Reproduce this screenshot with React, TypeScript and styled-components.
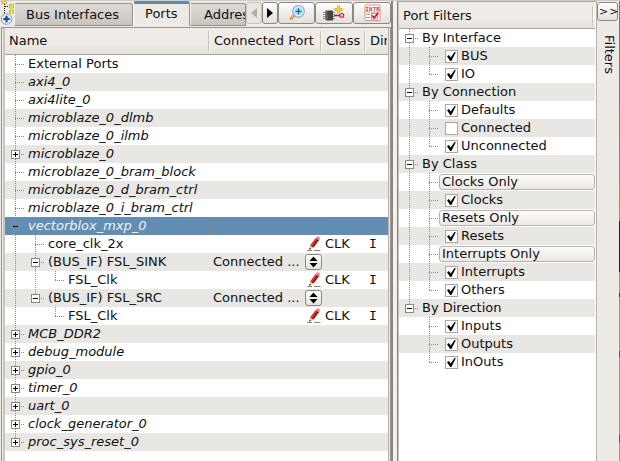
import React from 'react';
import styled, { createGlobalStyle, css } from 'styled-components';

const Global = createGlobalStyle`
  * { box-sizing: border-box; }
  body { margin: 0; background: #edeae6; overflow: hidden; }
`;

const Window = styled.div`
  display: flex;
  width: 620px;
  height: 461px;
  overflow: hidden;
  background: #edeae6;
  color: #101010;
  font: 13px/18px 'DejaVu Sans', sans-serif;
  white-space: pre;
  border-top: 1px solid #cfcbc6;
`;

const LeftPane = styled.div`
  display: flex;
  flex-direction: column;
  width: 391px;
  flex: none;
`;

const TabBar = styled.div`
  display: flex;
  height: 25px;
  flex: none;
  align-items: flex-start;
`;

const Corner = styled.div`
  width: 14px;
  height: 25px;
  flex: none;
`;

const Tab = styled.div<{ $w: number; $active?: boolean; $pad: number }>`
  flex: none;
  width: ${p => p.$w}px;
  height: 23px;
  margin-top: 2px;
  padding: 2px 0 0 ${p => p.$pad}px;
  overflow: hidden;
  border: 1px solid #96918c;
  border-left-color: #f4f2ef;
  border-radius: 3px 3px 0 0;
  background: linear-gradient(#dedad5, #c9c4be);
  ${p => p.$active && css`
    height: 25px;
    margin-top: 0;
    padding-top: 1px;
    border: 1px solid #96918c;
    border-left-color: #fff;
    border-top: 3px solid #5c89ae;
    border-bottom: 0;
    background: #edeae6;
  `}
`;

const ToolButton = styled.div<{ $w: number }>`
  display: flex;
  flex: none;
  align-items: center;
  justify-content: center;
  width: ${p => p.$w}px;
  height: 22px;
  margin: 1px 0 0;
  border: 1px solid #8d8883;
  border-radius: 3px;
  background: linear-gradient(#fdfcfb, #e3dfda);
`;

const ScrollButton = styled(ToolButton)<{ $disabled?: boolean }>`
  ${p => p.$disabled && css`
    border-color: #c5c0ba;
    background: #e9e6e2;
  `}
`;

const TableFrame = styled.div`
  display: flex;
  flex-direction: column;
  flex: 1;
  margin: 1px 0 0 1px;
  padding-right: 1px;
  border: solid #9a9590;
  border-width: 1px 1px 0 1px;
`;

const TableInner = styled.div`
  flex: 1;
  margin: 0 0 0 1px;
  border-left: 2px solid #c9c5c0;
  border-right: 1px solid #b5b0ab;
  background: #fff;
`;

const Header = styled.div`
  display: flex;
  align-items: center;
  height: 27px;
  overflow: hidden;
  background: linear-gradient(#efece8 60%, #e5e0db);
  border-bottom: 1px solid #aaa29b;
`;

const HeaderCell = styled.div<{ $w: number; $pad: number; $last?: boolean }>`
  flex: none;
  width: ${p => p.$w}px;
  height: 20px;
  padding: 1px 0 0 ${p => p.$pad}px;
  overflow: hidden;
  ${p => !p.$last && css`
    border-right: 1px solid #fff;
    box-shadow: inset -1px 0 #c6c1bb;
  `}
`;

const Row = styled.div<{ $alt?: boolean; $sel?: boolean }>`
  display: flex;
  height: 18px;
  background: ${p => (p.$sel ? '#638db3' : p.$alt ? '#e8e7e3' : '#fff')};
  color: ${p => (p.$sel ? '#eef3f8' : '#101010')};
`;

const NameCell = styled.div<{ $italic?: boolean }>`
  display: flex;
  flex: none;
  width: 205px;
  font-style: ${p => (p.$italic ? 'italic' : 'normal')};
`;

const Label = styled.span`
  padding-left: 3px;
  line-height: 17px;
`;

const PortCell = styled.div<{ $focus?: boolean }>`
  display: flex;
  flex: none;
  justify-content: space-between;
  width: 112px;
  padding-left: 3px;
  line-height: 17px;
  ${p => p.$focus && css`outline: 1px dotted #86878a; outline-offset: -1px;`}
`;

const ClassCell = styled.div`
  flex: none;
  width: 47px;
  padding-left: 3px;
  line-height: 17px;
`;

const DirCell = styled.div`
  font-family: 'DejaVu Sans Mono', monospace;
  line-height: 17px;
`;

const GuideSvg = styled.svg`
  display: block;
  flex: none;
`;

const Divider = styled.div`
  flex: none;
  width: 6px;
  border-left: 2px solid #8b8681;
  background: #f3f1ee;
`;

const FilterPane = styled.div`
  flex: none;
  width: 199px;
  border-left: 1px solid #85807b;
  padding-left: 1px;
  padding-right: 1px;
  background: linear-gradient(90deg, #c9c5c0 1px, #fff 1px);
  border-top: 1px solid #a9a5a0;
`;

const FilterHeader = styled.div`
  display: flex;
  justify-content: space-between;
  height: 27px;
  padding: 5px 1px 0 4px;
  background: linear-gradient(#efece8 60%, #e5e0db);
  border-bottom: 1px solid #aaa29b;
`;

const HeaderRule = styled.div`
  width: 2px;
  height: 20px;
  margin-top: -1px;
  border-left: 1px solid #c6c1bb;
  border-right: 1px solid #fff;
`;

const CheckBox = styled.div`
  flex: none;
  width: 13px;
  height: 13px;
  margin: 3px 0 0 6px;
  border: 1px solid #aaa6a0;
  background: #fff;
`;

const OnlyButton = styled.div`
  flex: 1;
  height: 16px;
  margin-top: 1px;
  padding-left: 2px;
  border: 1px solid #b8b2ab;
  border-radius: 3px;
  background: linear-gradient(#fdfcfb, #ece8e4);
  line-height: 13px;
`;

const SideBar = styled.div`
  display: flex;
  flex-direction: column;
  flex: none;
  width: 23px;
  border-left: 1px solid #b6b1ac;
  padding-top: 1px;
`;

const ExpandButton = styled.div`
  width: 21px;
  height: 19px;
  padding-left: 1px;
  border: 1px solid #8d8883;
  border-radius: 3px;
  background: linear-gradient(#fff, #e3dfda);
  font-size: 11px;
  line-height: 17px;
  letter-spacing: 1px;
`;

const SideLabel = styled.div`
  margin: 14px 0 0 4px;
  width: 18px;
  line-height: 19px;
  writing-mode: vertical-rl;
`;

const Edge = styled.div`
  flex: none;
  width: 1px;
  background: linear-gradient(#77767f 0 100px, #a58f88 220px, #222 220px 271px, #9a979b 271px 292px, #333 292px 296px, #9a979b 296px 350px, #6b3d9c 350px 356px, #9a979b 356px 434px, #6b3d9c 434px 441px, #9a979b 441px);
`;

type Kind = 'none' | 'line' | 'tee' | 'end' | 'plus' | 'minus' | 'minusEnd' | 'plusEnd';

function Guide({ kind, selected }: { kind: Kind; selected?: boolean }) {
  const box = kind.startsWith('plus') || kind.startsWith('minus');
  const stops = kind === 'end' || kind.endsWith('End');
  return (
    <GuideSvg width="20" height="18" shapeRendering="crispEdges" fill="none" stroke="#8c8985">
      {kind !== 'none' && <path d={stops ? 'M10.5 0V10' : 'M10.5 0V18'} strokeDasharray="1 1" />}
      {kind !== 'none' && kind !== 'line' && <path d="M10 9.5H19" strokeDasharray="1 1" />}
      {box && (
        <>
          <rect x="6.5" y="5.5" width="8" height="8" fill={selected ? '#638db3' : '#fff'} />
          <path d="M8 9.5H13" stroke="#000" />
          {kind.startsWith('plus') && <path d="M10.5 7V12" stroke="#000" />}
        </>
      )}
    </GuideSvg>
  );
}

const Pencil = () => (
  <svg width="16" height="18" viewBox="0 0 16 18">
    <path d="M1 15.5H6M8 15.5h6.5" stroke="#8b8884" />
    <path d="M3.2 15l.8-4.6 3.4 2.2z" fill="#ecc98f" />
    <path d="M3.2 15l.4-2.2 1.5 1z" fill="#222" />
    <path d="M4 10.4L9.6 3l3.2 2.2-5.4 7.4z" fill="#d23a30" />
    <path d="M5.8 11.6L11.3 4l1.6 1.2-5.5 7.4z" fill="#9c1a1a" />
    <path d="M9.6 3l1.6-2 3.2 2.1-1.6 2.1z" fill="#f0808c" />
  </svg>
);

const Spinner = styled.div`
  flex: none;
  width: 17px;
  height: 16px;
  margin: 1px 0 0 0;
  border: 1px solid #8d8883;
  border-radius: 3px;
  background: linear-gradient(#fff, #e6e2dd);
`;

const IconSlot = styled.div`
  display: flex;
  margin: 0 0 0 auto;
`;

const Glyph = styled.svg`
  display: block;
`;

const Check = () => (
  <Glyph width="11" height="11" viewBox="0 0 11 11">
    <path d="M1 5.2l2-1.1 1.6 2.4L8.6 1l1.2.3L5.4 9.9H4.2z" fill="#000" />
  </Glyph>
);

const CornerIcon = () => (
  <Glyph width="14" height="25" viewBox="0 0 14 25">
    <path d="M1.5 0h5v2.5h-5z" fill="#f4ec18" stroke="#aaa14c" strokeWidth=".6" />
    <path d="M4.5 3v9M5 5.5h4" stroke="#111" strokeDasharray="1 1" />
    <path d="M9.5 3.5h4v3.5h-4zM9.5 9h4v3h-4z" fill="#f4ec18" stroke="#aaa14c" strokeWidth=".7" />
    <circle cx="6.5" cy="18" r="5.3" fill="#e2edf8" stroke="#8b9db6" />
    <path d="M6.5 14.8v6.4M3.3 18h6.4" stroke="#174b9e" strokeWidth="2.2" />
  </Glyph>
);

const ZoomIcon = () => (
  <svg width="18" height="18" viewBox="0 0 18 18">
    <path d="M3 14.5l3-3" stroke="#c9823a" strokeWidth="2.8" strokeLinecap="round" />
    <path d="M2.8 14.4l3-3" stroke="#f1ca9c" strokeWidth="1.1" />
    <circle cx="10.5" cy="7.3" r="5.8" fill="#eef8fc" stroke="#8fa5c4" strokeWidth="1.2" />
    <circle cx="10.5" cy="7.3" r="4.3" fill="#a9e3fa" />
    <path d="M10.5 4.3v6M7.5 7.3h6" stroke="#1b5fa5" strokeWidth="1.3" />
  </svg>
);

const ChipIcon = () => (
  <svg width="22" height="18" viewBox="0 0 22 18">
    <path d="M0 8.5h12M0 10.5h12M0 12.5h12M0 14.5h12" stroke="#77736f" strokeWidth=".8" />
    <path d="M2.5 6.5h7.5v10H2.5z" fill="#454545" />
    <path d="M4 7v9" stroke="#777" />
    <path d="M11 11.5h6" stroke="#ad173d" strokeWidth="1.5" />
    <circle cx="18.8" cy="11.5" r="1.9" fill="#fff" stroke="#c91c4b" strokeWidth="1.2" />
    <path d="M15.5 1.5v8M11.5 5.5h8" stroke="#cba52c" strokeWidth="2.8" />
    <path d="M15.5 2v7M12 5.5h7" stroke="#f7d64a" strokeWidth="1.6" />
  </svg>
);

const IntrText = styled.text`
  font: bold 5.5px 'DejaVu Sans Mono', monospace;
  fill: #e22c32;
`;

const IntrIcon = () => (
  <svg width="17" height="18" viewBox="0 0 17 18">
    <rect x="1" y="1" width="15" height="15.5" rx="1" fill="#fff" stroke="#dc8b8c" />
    <IntrText x="1.5" y="6.6" textLength="14">INTR</IntrText>
    <path d="M1 8h15" stroke="#df8e8e" />
    <path d="M2.5 10.5H6M2.5 13.5H6" stroke="#888" />
    <rect x="7.5" y="9.5" width="6" height="5.5" fill="#fff" stroke="#777" strokeWidth=".7" />
    <path d="M8.2 11.5l2 2.4 4-5" fill="none" stroke="#dd1722" strokeWidth="1.8" />
  </svg>
);

type PortRow = {
  name: string;
  guides: Kind[];
  italic?: boolean;
  selected?: boolean;
  bus?: boolean;
  clk?: boolean;
};

const portRows: PortRow[] = [
  { name: 'External Ports', guides: ['tee'] },
  { name: 'axi4_0', guides: ['tee'], italic: true },
  { name: 'axi4lite_0', guides: ['tee'], italic: true },
  { name: 'microblaze_0_dlmb', guides: ['tee'], italic: true },
  { name: 'microblaze_0_ilmb', guides: ['tee'], italic: true },
  { name: 'microblaze_0', guides: ['plus'], italic: true },
  { name: 'microblaze_0_bram_block', guides: ['tee'], italic: true },
  { name: 'microblaze_0_d_bram_ctrl', guides: ['tee'], italic: true },
  { name: 'microblaze_0_i_bram_ctrl', guides: ['tee'], italic: true },
  { name: 'vectorblox_mxp_0', guides: ['minus'], italic: true, selected: true },
  { name: 'core_clk_2x', guides: ['line', 'tee'], clk: true },
  { name: '(BUS_IF) FSL_SINK', guides: ['line', 'minus'], bus: true },
  { name: 'FSL_Clk', guides: ['line', 'line', 'end'], clk: true },
  { name: '(BUS_IF) FSL_SRC', guides: ['line', 'minusEnd'], bus: true },
  { name: 'FSL_Clk', guides: ['line', 'none', 'end'], clk: true },
  { name: 'MCB_DDR2', guides: ['plus'], italic: true },
  { name: 'debug_module', guides: ['plus'], italic: true },
  { name: 'gpio_0', guides: ['plus'], italic: true },
  { name: 'timer_0', guides: ['plus'], italic: true },
  { name: 'uart_0', guides: ['plus'], italic: true },
  { name: 'clock_generator_0', guides: ['plus'], italic: true },
  { name: 'proc_sys_reset_0', guides: ['plusEnd'], italic: true },
];

type FilterRow = { name: string; type: 'group' | 'check' | 'button'; off?: boolean };

const filterRows: FilterRow[] = [
  { name: 'By Interface', type: 'group' },
  { name: 'BUS', type: 'check' },
  { name: 'IO', type: 'check' },
  { name: 'By Connection', type: 'group' },
  { name: 'Defaults', type: 'check' },
  { name: 'Connected', type: 'check', off: true },
  { name: 'Unconnected', type: 'check' },
  { name: 'By Class', type: 'group' },
  { name: 'Clocks Only', type: 'button' },
  { name: 'Clocks', type: 'check' },
  { name: 'Resets Only', type: 'button' },
  { name: 'Resets', type: 'check' },
  { name: 'Interrupts Only', type: 'button' },
  { name: 'Interrupts', type: 'check' },
  { name: 'Others', type: 'check' },
  { name: 'By Direction', type: 'group' },
  { name: 'Inputs', type: 'check' },
  { name: 'Outputs', type: 'check' },
  { name: 'InOuts', type: 'check' },
];

const lastGroup = filterRows.map(r => r.type).lastIndexOf('group');

function FilterItem({ row, index }: { row: FilterRow; index: number }) {
  const next = filterRows[index + 1];
  const isLast = !next || next.type === 'group';
  return (
    <Row $alt={index % 2 === 1}>
      {row.type === 'group' ? (
        <Guide kind={index === lastGroup ? 'minusEnd' : 'minus'} />
      ) : (
        <>
          <Guide kind={index > lastGroup ? 'none' : 'line'} />
          <Guide kind={isLast ? 'end' : 'tee'} />
        </>
      )}
      {row.type === 'check' && <CheckBox>{!row.off && <Check />}</CheckBox>}
      {row.type === 'button' ? <OnlyButton>{row.name}</OnlyButton> : <Label>{row.name}</Label>}
    </Row>
  );
}

export default function App() {
  return (
    <>
      <Global />
      <Window>
        <LeftPane>
          <TabBar>
            <Corner><CornerIcon /></Corner>
            <Tab $w={119} $pad={11}>Bus Interfaces</Tab>
            <Tab $w={57} $pad={11} $active>Ports</Tab>
            <Tab $w={56} $pad={13}>Addresses</Tab>
            <ScrollButton $w={16} $disabled>
              <svg width="6" height="10"><path d="M6 0v10L0 5z" fill="#b3afaa" /></svg>
            </ScrollButton>
            <ScrollButton $w={16}>
              <svg width="6" height="10"><path d="M0 0v10l6-5z" fill="#000" /></svg>
            </ScrollButton>
            <ToolButton $w={37}><ZoomIcon /></ToolButton>
            <ToolButton $w={38}><ChipIcon /></ToolButton>
            <ToolButton $w={38}><IntrIcon /></ToolButton>
          </TabBar>
          <TableFrame>
            <TableInner>
              <Header>
                <HeaderCell $w={205} $pad={4}>Name</HeaderCell>
                <HeaderCell $w={112} $pad={4}>Connected Port</HeaderCell>
                <HeaderCell $w={44} $pad={4}>Class</HeaderCell>
                <HeaderCell $w={21} $pad={4} $last>Dir</HeaderCell>
              </Header>
              {portRows.map((r, i) => (
                <Row key={i} $alt={i % 2 === 1} $sel={r.selected}>
                  <NameCell $italic={r.italic}>
                    {r.guides.map((g, j) => <Guide key={j} kind={g} selected={r.selected} />)}
                    <Label>{r.name}</Label>
                  </NameCell>
                  <PortCell $focus={r.selected}>
                    {r.bus && (
                      <>
                        Connected ...
                        <Spinner>
                          <Glyph width="15" height="14">
                            <path d="M3.5 6h8l-4-4.5zM3.5 8h8l-4 4.5z" fill="#000" />
                          </Glyph>
                        </Spinner>
                      </>
                    )}
                    {r.clk && <IconSlot><Pencil /></IconSlot>}
                  </PortCell>
                  {r.clk && (
                    <>
                      <ClassCell>CLK</ClassCell>
                      <DirCell>I</DirCell>
                    </>
                  )}
                </Row>
              ))}
            </TableInner>
          </TableFrame>
        </LeftPane>
        <Divider />
        <FilterPane>
          <FilterHeader>
            Port Filters
            <HeaderRule />
          </FilterHeader>
          {filterRows.map((r, i) => <FilterItem key={i} row={r} index={i} />)}
        </FilterPane>
        <SideBar>
          <ExpandButton>&gt;&gt;</ExpandButton>
          <SideLabel>Filters</SideLabel>
        </SideBar>
        <Edge />
      </Window>
    </>
  );
}
